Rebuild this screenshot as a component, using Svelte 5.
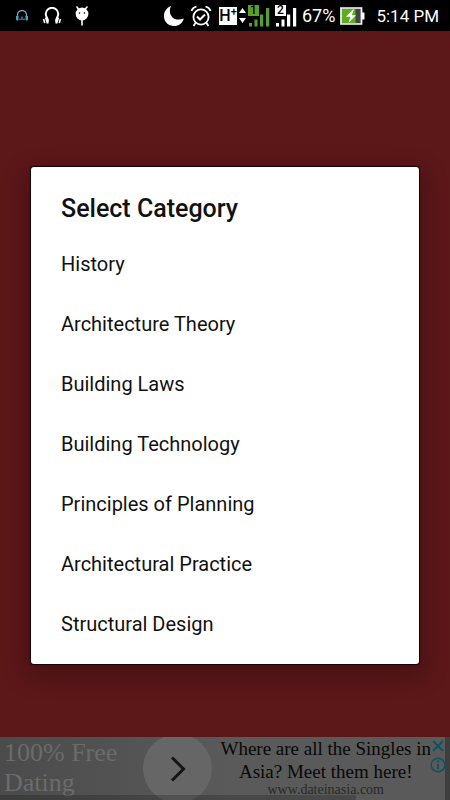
<script>
  const categories = [
    "History",
    "Architecture Theory",
    "Building Laws",
    "Building Technology",
    "Principles of Planning",
    "Architectural Practice",
    "Structural Design",
  ];

  let selected = $state("");
  let adOpen = $state(true);

  const pick = (name) => {
    selected = name;
  };
</script>

<div class="screen">
  <header class="status">
    <div class="notices">
      <svg class="player" width="14" height="13" viewBox="0 0 14 13" fill="none">
        <path d="M2.500 8V6a4.500 4.500 0 0 1 9 0v2" stroke="#73a9c4" stroke-width="1.300" />
        <path d="M1 7h2.500v4.500H2Q1 11.500 1 10zM10.500 7H13v3q0 1.500-1 1.500h-1.500z" fill="#4d9cc4" />
        <path d="M5 11V9.500M7 11V7.500M9 11V9.500" stroke="#5ba4c8" stroke-width="1.200" />
      </svg>
      <svg class="headphones" width="20" height="18" viewBox="0 0 20 18" fill="none" stroke="#fff">
        <path d="M5.500 14.500C7.500 13 3.500 10 3.800 7a6 6 0 0 1 12.400 0c.3 3-3.700 6-1.700 7.500" stroke-width="2" />
        <path d="M3.800 10.500l2 6M16.200 10.500l-2 6" stroke-width="2.200" />
        <path d="M1.500 12l1.300 4M18.500 12l-1.300 4" stroke-width="1.600" />
      </svg>
      <svg class="debug" width="14" height="20" viewBox="0 0 14 20">
        <path d="M2 1l2.500 4M12 1L9.500 4M7 14v5" stroke="#fff" stroke-width="1.600" stroke-linecap="round" />
        <circle cx="7" cy="8" r="6.400" fill="#fff" />
        <circle cx="4.500" cy="7" r="0.800" /><circle cx="9.500" cy="7" r="0.800" />
      </svg>
    </div>
    <div class="system">
      <svg width="22" height="22" viewBox="0 0 22 22">
        <path d="M8 1C-1.500 5-1 17 7 20.300c6 2.500 12.500-1 13.800-6.800C11 17.500 4 10 8 1z" fill="#fff" />
      </svg>
      <svg class="alarm" width="22" height="22" viewBox="0 0 22 22" fill="none" stroke="#fff" stroke-width="1.800">
        <circle cx="11" cy="12" r="7.600" />
        <path d="M1.500 6q1-3.500 5-4.500M20.500 6q-1-3.500-5-4.500M5.500 18l-2 3M16.500 18l2 3" />
        <path d="M7 11.500l3 3 5-5" stroke-width="2" />
      </svg>
      <span class="network">H<sup>+</sup></span>
      <svg class="traffic" width="7" height="17" viewBox="0 0 7 17" fill="#fff">
        <path d="M3.500 1L7 6H0zM3.500 16L0 11h7z" />
      </svg>
      <span class="sim">
        <svg width="22" height="22" viewBox="0 0 22 22" fill="#5b9f28">
          <path d="M0 0h11v11H0zM1 18h3v3.500H1zM6.500 14.500h3v7h-3zM12 9.500h3.200v12H12zM18 3h3.200v18.500H18z" />
        </svg>
        <b>1</b>
      </span>
      <span class="sim">
        <svg width="22" height="22" viewBox="0 0 22 22" fill="#fff">
          <path d="M0 0h11v11H0zM1 18h3v3.500H1zM6.500 14.500h3v7h-3zM12 9.500h3.200v12H12zM18 3h3.200v18.500H18z" />
        </svg>
        <b>2</b>
      </span>
      <span class="percent">67%</span>
      <svg class="battery" width="25" height="18" viewBox="0 0 25 18">
        <path d="M1 1h20.500v16H1z" fill="#444" />
        <path d="M2 2h13.500v14H2z" fill="#5cae20" />
        <path d="M1 1h20.500v16H1z" fill="none" stroke="#fff" stroke-width="1.700" />
        <path d="M22 5.500h2.500v7H22z" fill="#fff" />
        <path d="M13 2.500L6 9.800h4.500L8.500 16 16 8.300h-4.300L14 2.500z" fill="#fff" />
      </svg>
      <time>5:14 PM</time>
    </div>
  </header>

  <main>
    <div class="dialog" role="dialog" aria-labelledby="dialog-title">
      <h1 id="dialog-title">Select Category</h1>
      <ul>
        {#each categories as name}
          <li>
            <button class:selected={selected === name} onclick={() => pick(name)}>{name}</button>
          </li>
        {/each}
      </ul>
    </div>
  </main>

  {#if adOpen}
    <aside class="ad">
      <a class="offer" href="#ad">100% Free Dating</a>
      <a class="go" href="#ad" aria-label="Open ad">
        <svg width="18" height="28" viewBox="0 0 18 28">
          <path d="M3 2.500L14.500 14 3 25.500" fill="none" stroke="#151515" stroke-width="3" />
        </svg>
      </a>
      <a class="copy" href="#ad">
        <span class="line">Where are all the Singles in</span>
        <span class="line">Asia? Meet them here!</span>
        <span class="site">www.dateinasia.com</span>
      </a>
      <div class="choices">
        <button aria-label="Close ad" onclick={() => (adOpen = false)}>
          <svg width="14" height="14" viewBox="0 0 14 14">
            <path d="M2 2l10 10M12 2L2 12" stroke="#0c5363" stroke-width="1.800" />
          </svg>
        </button>
        <button aria-label="Ad information">
          <svg width="16" height="16" viewBox="0 0 16 16" fill="none" stroke="#0c5363">
            <circle cx="8" cy="8" r="6.800" stroke-width="1.500" />
            <path d="M8 3.500v2M8 6.800v5.400" stroke-width="2" />
          </svg>
        </button>
      </div>
    </aside>
  {/if}
</div>

<style>
  :global(body) {
    margin: 0;
    background: #5c1719;
  }

  .screen {
    display: grid;
    grid-template-rows: 31px 1fr 63px;
    min-height: 100vh;
    background: #5c1719;
    font-family: Roboto, "Liberation Sans", sans-serif;
  }

  .status {
    display: flex;
    justify-content: space-between;
    align-items: center;
    padding: 0 11px 0 15px;
    background: #000;
    color: #fff;
  }

  .notices,
  .system {
    display: flex;
    align-items: center;
  }

  .notices {
    gap: 13px;
  }

  .system {
    gap: 5px;
  }

  .network {
    width: 18px;
    height: 18px;
    margin-left: 2px;
    background: #fff;
    color: #000;
    font-size: 16px;
    font-weight: 500;
    line-height: 18px;
    text-align: center;
    white-space: nowrap;
  }

  .network sup {
    font-size: 11px;
    line-height: 1px;
  }

  .traffic {
    margin: 0 -3px;
  }

  .sim {
    position: relative;
    height: 22px;
  }

  .sim svg {
    display: block;
  }

  .sim b {
    position: absolute;
    top: 0;
    left: 0;
    width: 11px;
    color: #000;
    font-size: 12px;
    font-weight: 500;
    line-height: 11px;
    text-align: center;
  }

  .percent {
    font-size: 18px;
  }

  time {
    margin-left: 6px;
    font-size: 17px;
  }

  main {
    grid-row: 2 / 4;
    grid-column: 1;
    display: flex;
    flex-direction: column;
    justify-content: center;
    padding: 0 31px;
  }

  .dialog {
    padding: 20px 0 10px;
    border-radius: 3px;
    background: #fff;
    box-shadow: 0 0 1px 1px #160304, 0 8px 24px 4px rgba(0, 0, 0, 0.25);
    color: #111;
  }

  h1 {
    margin: 0;
    padding: 0 30px 3px;
    font-size: 25px;
    font-weight: 500;
    line-height: 44px;
  }

  ul {
    margin: 0;
    padding: 0;
    list-style: none;
  }

  .dialog button {
    display: block;
    width: 100%;
    padding: 0 30px;
    border: 0;
    background: none;
    color: #111;
    font: inherit;
    font-size: 20px;
    line-height: 60px;
    text-align: left;
    cursor: pointer;
  }

  .dialog button.selected {
    background: #eee;
  }

  .ad {
    grid-row: 3;
    grid-column: 1;
    position: relative;
    display: flex;
    overflow: hidden;
    border-right: 5px solid #3e3e3e;
    background: linear-gradient(90deg, #4b4b4b, #5a5a5a 52%, #5a5a5a);
    font-family: "Liberation Serif", serif;
  }

  .ad::after {
    content: "";
    position: absolute;
    bottom: 0;
    left: 0;
    width: 80%;
    height: 5px;
    background: rgba(0, 0, 0, 0.2);
  }

  .ad a {
    text-decoration: none;
  }

  .offer {
    flex: 1;
    padding: 1px 0 0 4px;
    color: #6b6b6b;
    font-size: 26px;
    line-height: 30px;
  }

  .go {
    display: flex;
    flex: none;
    align-items: center;
    justify-content: center;
    width: 69px;
    height: 69px;
    border-radius: 50%;
    margin-top: -3px;
    background: #666;
  }

  .copy {
    padding-left: 8px;
    color: #080808;
    text-align: center;
  }

  .copy span {
    display: block;
    white-space: nowrap;
  }

  .line {
    font-size: 19px;
    line-height: 23px;
  }

  .site {
    color: #282828;
    font-size: 14px;
    line-height: 14px;
  }

  .choices {
    display: flex;
    flex-direction: column;
    gap: 4px;
    width: 14px;
    padding-top: 2px;
  }

  .choices button {
    display: flex;
    justify-content: center;
    padding: 0;
    border: 0;
    background: none;
    cursor: pointer;
  }

  .choices svg {
    flex: none;
  }
</style>
